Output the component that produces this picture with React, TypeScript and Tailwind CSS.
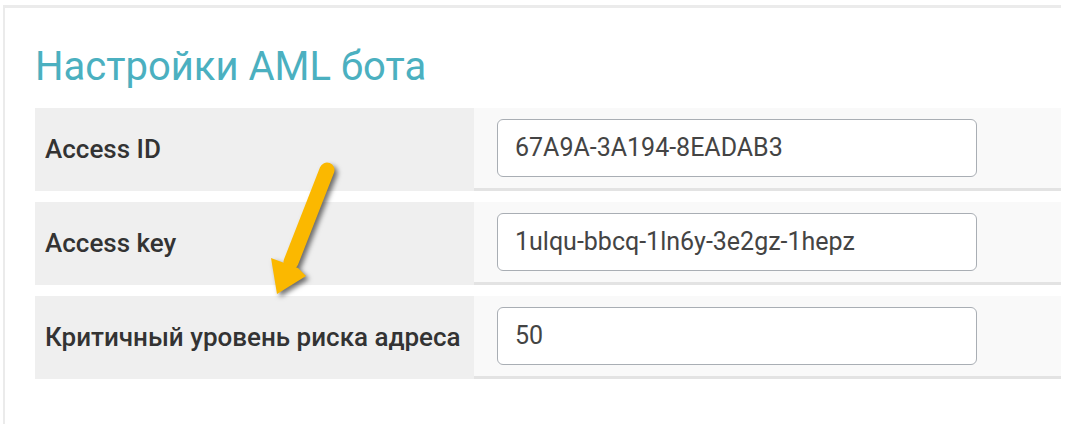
import React from "react";

const rows = [
  { label: "Access ID", value: "67A9A-3A194-8EADAB3" },
  { label: "Access key", value: "1ulqu-bbcq-1ln6y-3e2gz-1hepz" },
  { label: "Критичный уровень риска адреса", value: "50" },
];

function Arrow() {
  return (
    <svg
      className="absolute left-0 top-0 pointer-events-none"
      width="1075"
      height="424"
      style={{ filter: "drop-shadow(3px 3px 2.5px rgba(0,0,0,0.55))" }}
    >
      <line x1="327" y1="170" x2="291" y2="262" stroke="#fbb800" strokeWidth="15" strokeLinecap="round" />
      <polygon points="277,294 271,258 287,264 298,268 306,276" fill="#fbb800" />
    </svg>
  );
}

export default function App() {
  return (
    <div className="relative w-[1075px] h-[424px] overflow-hidden bg-white" style={{ fontFamily: "Roboto, 'Noto Sans', sans-serif" }}>
      <div className="mt-[5px] ml-[3px] w-[1058px] h-[419px] border-t-[3px] border-l-2 border-[#ebebeb] bg-white pl-[30px] pt-[35px]">
        <h1 className="text-[40px] leading-[48px] text-[#4bb0c0] font-normal">Настройки AML бота</h1>
        <div className="mt-[17px] flex flex-col gap-[11px]">
          {rows.map((r) => (
            <div key={r.label} className="flex h-[83px]">
              <div className="w-[439px] bg-[#efefef] flex items-center pl-[10px] text-[26px] font-medium text-[#333] whitespace-nowrap">
                {r.label}
              </div>
              <div className="flex-1 bg-[#f9f9f9] border-b-[3px] border-[#e3e3e3] pl-[23px] pt-[11px]">
                <div className="w-[480px] h-[58px] bg-white border-[1.5px] border-[#a9aeb4] rounded-[6px] flex items-center pl-[17px] text-[25px] text-[#444]">
                  {r.value}
                </div>
              </div>
            </div>
          ))}
        </div>
      </div>
      <Arrow />
    </div>
  );
}
